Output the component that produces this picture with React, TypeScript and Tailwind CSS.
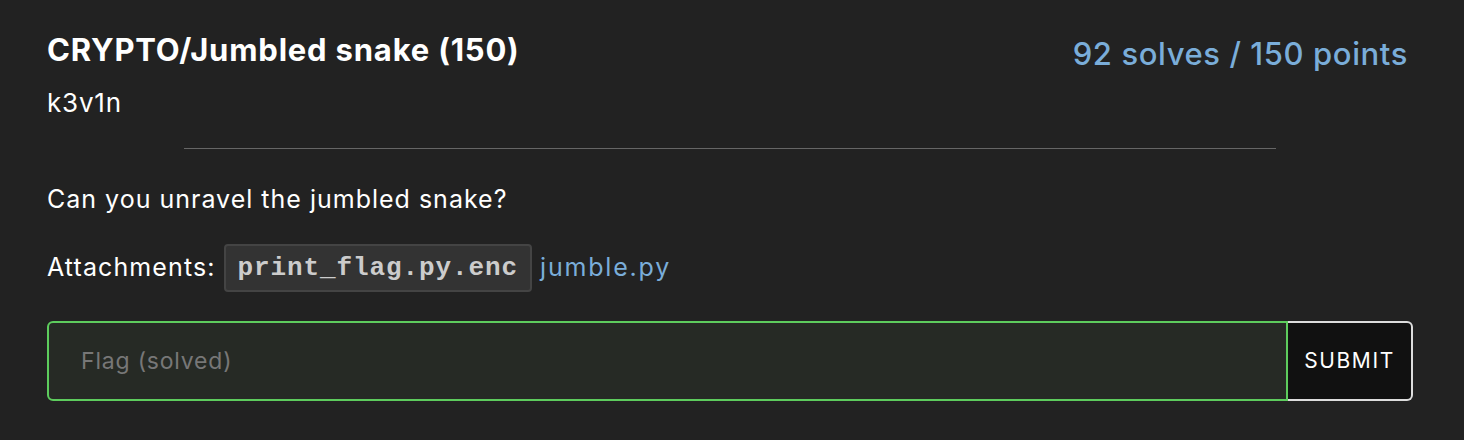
export default function App() {
  return (
    <div className="min-h-[440px] w-full bg-[#222222] pl-[47px] pr-[51px] pt-[28px] font-['Inter',sans-serif] text-white">
      {/* Header */}
      <div className="flex items-start justify-between">
        <div>
          <h1 className="text-[31px] font-bold leading-[44px] tracking-[0.8px]">CRYPTO/Jumbled snake (150)</h1>
          <div className="mt-[15px] text-[26px] leading-[32px] tracking-[0.8px]">k3v1n</div>
        </div>
        <div className="mt-[4px] mr-[5px] text-[31px] font-medium leading-[44px] tracking-[0.6px] text-[#7aadd9]">92 solves / 150 points</div>
      </div>

      <hr className="mx-auto mt-[29px] w-4/5 border-0 border-t border-[#666]" />

      <p className="mt-[34px] text-[25px] leading-[32px] tracking-[1px]">Can you unravel the jumbled snake?</p>

      <div className="mt-[29px] flex items-center gap-[8px] text-[25px] tracking-[1.1px]">
        <span>Attachments:</span>
        <code className="rounded-[4px] border-2 border-[#444] bg-[#333] px-[12px] py-[7px] font-['Liberation_Mono',monospace] text-[26px] font-bold leading-[30px] tracking-[0.9px] text-[#ccc]">
          print_flag.py.enc
        </code>
        <a className="tracking-[1.8px] text-[#7aadd9]">jumble.py</a>
      </div>

      {/* Flag form */}
      <div className="mt-[29px] flex h-[80px]">
        <div className="flex flex-1 items-center rounded-l-[6px] border-2 border-[#5dcc5d] bg-[#262a25] pl-[32px]">
          <span className="text-[23px] tracking-[0.8px] text-[#777]">Flag (solved)</span>
        </div>
        <button className="w-[125px] rounded-r-[6px] border-2 border-l-0 border-[#ddd] bg-[#111] text-[21px] tracking-[1.6px] text-white">
          SUBMIT
        </button>
      </div>
    </div>
  );
}
